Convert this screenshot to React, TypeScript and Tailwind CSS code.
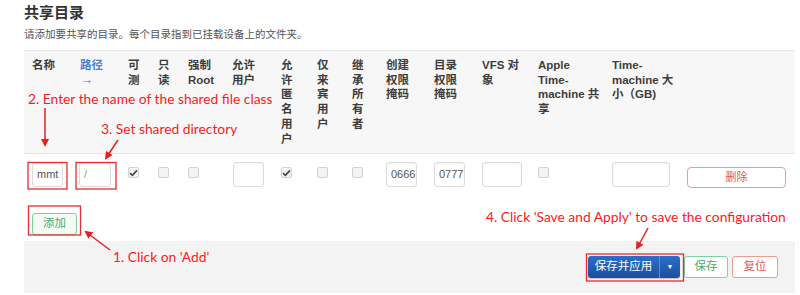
import React from 'react';

const headers: { lines: string[]; blue?: boolean }[] = [
  { lines: ['名称'] },
  { lines: ['路径', '→'], blue: true },
  { lines: ['可', '测'] },
  { lines: ['只', '读'] },
  { lines: ['强制', 'Root'] },
  { lines: ['允许', '用户'] },
  { lines: ['允', '许', '匿', '名', '用', '户'] },
  { lines: ['仅', '来', '宾', '用', '户'] },
  { lines: ['继', '承', '所', '有', '者'] },
  { lines: ['创建', '权限', '掩码'] },
  { lines: ['目录', '权限', '掩码'] },
  { lines: ['VFS 对', '象'] },
  { lines: ['Apple', 'Time-', 'machine 共', '享'] },
  { lines: ['Time-', 'machine 大', '小（GB)'] },
];

const cols = 'grid grid-cols-[48px_48px_30px_30px_44px_49px_36px_35px_34px_48px_48px_56px_74px_75px_116px]';

function TextBox({ value, w, light }: { value?: string; w: string; light?: boolean }) {
  return (
    <div
      className={`${w} h-[25px] flex items-center px-[4px] border border-[#dcdcdc] rounded-[3px] bg-white shadow-[inset_0_1px_2px_rgba(0,0,0,0.06)] text-[11px] ${
        light ? 'text-[#9a9a9a]' : 'text-[#555]'
      }`}
    >
      {value}
    </div>
  );
}

function Check({ on }: { on?: boolean }) {
  return (
    <div className="mt-[5px] w-[11px] h-[11px] rounded-[2px] border border-[#d2d2d2] bg-[#f4f4f4] flex items-center justify-center">
      {on && (
        <svg width="9" height="8" viewBox="0 0 9 8">
          <path d="M1 4.2 L3.4 6.4 L8 1.4" fill="none" stroke="#444" strokeWidth="1.6" />
        </svg>
      )}
    </div>
  );
}

export default function App() {
  return (
    <div className="relative w-[800px] h-[295px] bg-white overflow-hidden font-['Liberation_Sans','Noto_Sans_CJK_SC',sans-serif]">
      {/* Title */}
      <div className="pl-6 pt-[3px]">
        <h2 className="text-[15px] leading-[19px] font-bold text-[#333]">共享目录</h2>
        <p className="mt-[5px] text-[10.5px] leading-[14px] text-[#555]">请添加要共享的目录。每个目录指到已挂载设备上的文件夹。</p>
      </div>

      <div className="ml-6 mr-[5px] mt-[9px]">
        {/* Header */}
        <div className={`${cols} h-[104px] bg-[#f7f7f7] border-t border-b border-[#e6e6e6] pt-[7px]`}>
          {headers.map((h, i) => (
            <div
              key={i}
              className={`pl-2 text-[11.5px] leading-[14.7px] font-bold ${h.blue ? 'text-[#4a82d6]' : 'text-[#3d3d3d]'}`}
            >
              {h.lines.map((l, j) => (
                <div key={j} className={`whitespace-nowrap ${l === '→' ? 'text-[13px]' : ''}`}>{l}</div>
              ))}
            </div>
          ))}
        </div>

        {/* Row */}
        <div className={`${cols} h-[44px] pt-[8px]`}>
          <div className="pl-2"><TextBox value="mmt" w="w-[31px]" /></div>
          <div className="pl-[7px]"><TextBox value="/" w="w-[32px]" light /></div>
          <div className="pl-2"><Check on /></div>
          <div className="pl-2"><Check /></div>
          <div className="pl-2"><Check /></div>
          <div className="pl-[9px]"><TextBox w="w-[31px]" /></div>
          <div className="pl-2"><Check on /></div>
          <div className="pl-2"><Check /></div>
          <div className="pl-2"><Check /></div>
          <div className="pl-2"><TextBox value="0666" w="w-[31px]" /></div>
          <div className="pl-2"><TextBox value="0777" w="w-[31px]" /></div>
          <div className="pl-2"><TextBox w="w-[40px]" /></div>
          <div className="pl-2"><Check /></div>
          <div className="pl-2"><TextBox w="w-[58px]" /></div>
          <div className="pl-2 pt-[2px]">
            <button className="w-[99px] h-[21px] rounded-[4px] border border-[#f09a90] bg-white text-[11px] text-[#e2594c]">删除</button>
          </div>
        </div>

        {/* Add */}
        <div className="pl-2 pt-[12px] h-[43px]">
          <button className="w-[45px] h-[22px] rounded-[3px] border border-[#7dd3a0] bg-[#f4fbf7] text-[11.5px] text-[#46ab6b]">添加</button>
        </div>
      </div>

      {/* Footer actions */}
      <div className="ml-6 mr-[5px] h-[52px] bg-[#f3f3f3] flex items-center justify-end gap-[4px] pr-[17px]">
        <div className="flex h-[22px] rounded-[3px] bg-gradient-to-b from-[#2c6fc8] to-[#1a4f9f] text-white text-[11.5px] shadow-[0_1px_1px_rgba(0,0,0,0.2)]">
          <span className="w-[71px] flex items-center justify-center">保存并应用</span>
          <span className="w-[21px] border-l border-[#5d8fd4] flex items-center justify-center text-[7px]">▼</span>
        </div>
        <button className="w-[44px] h-[22px] rounded-[3px] border border-[#7dd3a0] bg-white text-[11.5px] text-[#46ab6b]">保存</button>
        <button className="w-[46px] h-[22px] rounded-[3px] border border-[#f09a90] bg-white text-[11.5px] text-[#e2594c]">复位</button>
      </div>

      {/* Annotations */}
      <svg className="absolute inset-0 pointer-events-none" width="800" height="295">
        <defs>
          <marker id="ah" markerWidth="8" markerHeight="8" refX="6" refY="4" orient="auto" markerUnits="userSpaceOnUse">
            <path d="M0 0 L8 4 L0 8 Z" fill="#f01c1c" />
          </marker>
        </defs>
        <g fill="none" stroke="#ea2a2a" strokeWidth="1.3">
          <rect x="28" y="162.5" width="39" height="26.5" />
          <rect x="76" y="162.5" width="40" height="26.5" />
          <rect x="28.5" y="206" width="52" height="29" />
          <rect x="586.5" y="254" width="97" height="27" />
        </g>
        <g stroke="#f01c1c" strokeWidth="1.5" markerEnd="url(#ah)">
          <line x1="45" y1="108" x2="45" y2="145" />
          <line x1="118" y1="140" x2="106" y2="158" />
          <line x1="110" y1="250" x2="86" y2="232" />
          <line x1="648" y1="228" x2="637" y2="248" />
        </g>
      </svg>
      <div className="absolute left-[28px] top-[90px] text-[13.8px] leading-[18px] text-[#f51d1d] font-['Lato',sans-serif] whitespace-nowrap">2. Enter the name of the shared file class</div>
      <div className="absolute left-[101px] top-[120px] text-[13.8px] leading-[18px] text-[#f51d1d] font-['Lato',sans-serif] whitespace-nowrap">3. Set shared directory</div>
      <div className="absolute left-[113px] top-[248px] text-[13.8px] leading-[18px] text-[#f51d1d] font-['Lato',sans-serif] whitespace-nowrap">1. Click on 'Add'</div>
      <div className="absolute left-[486px] top-[208px] text-[13.8px] leading-[18px] text-[#f51d1d] font-['Lato',sans-serif] whitespace-nowrap">4. Click 'Save and Apply' to save the configuration</div>
    </div>
  );
}
